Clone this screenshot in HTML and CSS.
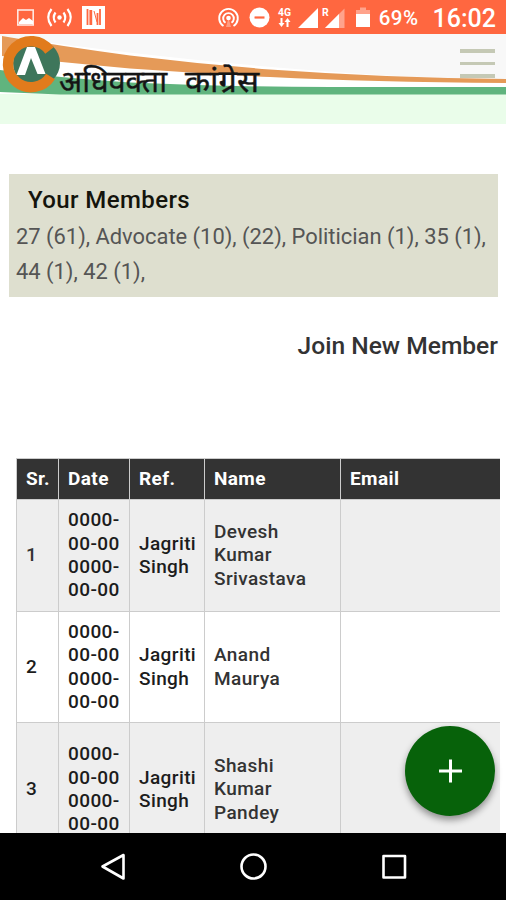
FILE: index.html
```html
<!DOCTYPE html>
<html lang="en">
<head>
    <meta charset="UTF-8">
    <meta name="viewport" content="width=device-width, initial-scale=1.0">
    <title>Your Members</title>
    <link rel="stylesheet" href="styles.css">
</head>
<body>
    <div class="screen">
        <!-- Status Bar -->
        <div class="status-bar">
            <svg width="506" height="34" viewBox="0 0 506 34" fill="none" stroke="#fff">
                <rect x="17.8" y="10" width="15.4" height="15" stroke-width="1.6" opacity="0.85"/>
                <path d="M19 22l4-4 3 2 3-2 4 3v3H19z" fill="#fff" stroke="none"/>
                <circle cx="59.5" cy="17.5" r="2.2" fill="#fff" stroke="none"/>
                <path d="M55.5 12.5q-3.5 5 0 10M63.5 12.5q3.5 5 0 10M51.5 9q-6.5 8.500 0 17M67.5 9q6.5 8.500 0 17" stroke-width="2.2"/>
                <rect x="82" y="6" width="23" height="23" fill="#fff" stroke="none"/>
                <path d="M87.5 9v16M97.500 13v12M100 9v16" stroke="#ff6740" stroke-width="1.8"/>
                <path d="M90.800 10v15" stroke="#ff6740" stroke-width="2.800"/>
                <path d="M94 11l3 11" stroke="#ff6740" stroke-width="1"/>
                <circle cx="228.500" cy="18" r="2.300" fill="#fff" stroke="none"/>
                <path d="M225.500 22.800a5.300 5.300 0 1 1 6 0M223.500 26a9.300 9.300 0 1 1 10 0" stroke-width="1.900"/>
                <path d="M228.500 18l-2.500 9h5z" fill="#fff" stroke="none" opacity="0.35"/>
                <circle cx="259.500" cy="17.500" r="10" fill="#fff" stroke="none"/>
                <path d="M254.500 17.500h10" stroke="#ff6740" stroke-width="2.200"/>
                <text class="signal-text" x="278" y="16" textLength="13" lengthAdjust="spacingAndGlyphs">4G</text>
                <path d="M281.500 18v6M287.500 21v6" stroke-width="2"/>
                <path d="M278.500 23h6l-3 4zM284.500 22h6l-3-4z" fill="#fff" stroke="none"/>
                <path d="M298 28L318 8v20z" fill="#fff" stroke="none"/>
                <text class="signal-text" x="322" y="16">R</text>
                <path d="M325 28L344.500 8.500V28z" fill="#fff" stroke="none" opacity="0.4"/>
                <path d="M325 28L339 14v14z" fill="#fff" stroke="none"/>
                <path d="M356 14V10h4V7.500h6V10h4v4z" fill="#fff" stroke="none" opacity="0.4"/>
                <path d="M356 14h14v13h-14z" fill="#fff" stroke="none"/>
            </svg>
            <div class="status-text">
                <span class="battery">69%</span>
                <span class="clock">16:02</span>
            </div>
        </div>

        <!-- Header with banner and menu -->
        <header class="header">
            <svg class="banner" width="506" height="90" viewBox="0 34 506 90">
                <rect x="0" y="34" width="506" height="60" fill="#fff"/>
                <path d="M0 34H506V80Q280 75 0 36z" fill="#f8f8f8"/>
                <path d="M2 36Q60 46 130 55.500Q200 64 270 69.500Q390 78 506 79V83Q370 82 270 77Q200 73.500 130 68.500Q60 62 2 56z" fill="#e59a58"/>
                <path d="M0 70Q60 78 130 82.500Q230 87 330 87H506V94.500H60L0 92z" fill="#60b47e"/>
                <circle cx="36.500" cy="63" r="23.500" fill="#3e765b"/>
                <path d="M49.500 50.500A23 23 0 1 0 50.500 76.500" fill="none" stroke="#e17b1c" stroke-width="10.500"/>
                <path d="M16.500 75L27 47h8l10.500 27h-8L31 58l-6 17z" fill="#fff"/>
                <text class="banner-text" x="59" y="91.500" textLength="108" lengthAdjust="spacingAndGlyphs">अधिवक्ता</text>
                <text class="banner-text" x="185" y="91.500" textLength="74" lengthAdjust="spacingAndGlyphs">कांग्रेस</text>
            </svg>
            <div class="menu-icon">
                <span></span>
                <span></span>
                <span></span>
            </div>
        </header>

        <main class="content">
            <div class="members-box">
                <h2>Your Members</h2>
                <p>27 (61), Advocate (10), (22), Politician (1), 35 (1), 44 (1), 42 (1),</p>
            </div>

            <div class="join-link">Join New Member</div>

            <!-- Members Table -->
            <div class="table-container">
                <table>
                    <colgroup>
                        <col class="col-sr">
                        <col class="col-date">
                        <col class="col-ref">
                        <col class="col-name">
                        <col class="col-email">
                    </colgroup>
                    <tr class="head-row">
                        <th>Sr.</th>
                        <th>Date</th>
                        <th>Ref.</th>
                        <th>Name</th>
                        <th>Email</th>
                    </tr>
                    <tr class="row-1">
                        <td>1</td>
                        <td class="dark">0000-<br>00-00<br>0000-<br>00-00</td>
                        <td class="dark">Jagriti<br>Singh</td>
                        <td>Devesh<br>Kumar<br>Srivastava</td>
                        <td></td>
                    </tr>
                    <tr class="row-2">
                        <td class="dark">2</td>
                        <td class="dark">0000-<br>00-00<br>0000-<br>00-00</td>
                        <td class="dark">Jagriti<br>Singh</td>
                        <td>Anand<br>Maurya</td>
                        <td></td>
                    </tr>
                    <tr class="row-3">
                        <td class="dark">3</td>
                        <td class="dark">0000-<br>00-00<br>0000-<br>00-00</td>
                        <td class="dark">Jagriti<br>Singh</td>
                        <td>Shashi<br>Kumar<br>Pandey</td>
                        <td></td>
                    </tr>
                </table>
            </div>
        </main>

        <button class="add-button" aria-label="Add">
            <svg width="24" height="24" viewBox="0 0 24 24" stroke="#fff" stroke-width="3">
                <path d="M12.500 .5v23M1 12h23"/>
            </svg>
        </button>

        <!-- Navigation Bar -->
        <nav class="nav-bar">
            <svg width="506" height="67" viewBox="0 833 506 67" fill="none" stroke="#fff" stroke-width="2.600" stroke-linejoin="round">
                <path d="M123.500 855v23.500L102.500 866.500z"/>
                <circle cx="253.500" cy="866.500" r="12"/>
                <rect x="383.500" y="856" width="21.500" height="21.500"/>
            </svg>
        </nav>
    </div>
</body>
</html>
```
FILE: styles.css
```css
body {
    margin: 0;
    font-family: Roboto, Arial, sans-serif;
    background: #fff;
    color: #333;
}
.screen {
    position: relative;
    display: flex;
    flex-direction: column;
    height: 900px;
    width: 506px;
    overflow: hidden;
}
svg {
    display: block;
}
.status-bar {
    position: relative;
    height: 34px;
    flex-shrink: 0;
    background: #ff6740;
}
.status-text {
    position: absolute;
    top: 0;
    right: 10px;
    display: flex;
    align-items: flex-start;
    gap: 14px;
    color: #fff;
    font-weight: 500;
}
.battery {
    font-size: 20.500px;
    letter-spacing: 0.5px;
    line-height: 37px;
}
.clock {
    font-size: 25px;
    line-height: 38px;
}
.signal-text {
    font-size: 10.5px;
    font-weight: 700;
    fill: #fff;
    stroke: none;
}
.header {
    position: relative;
    height: 90px;
    flex-shrink: 0;
    background: #eafdea;
}
.banner-text {
    font-family: "Noto Sans Devanagari", "Noto Sans", sans-serif;
    font-size: 31px;
    fill: #151515;
    stroke: #151515;
    stroke-width: 0.4px;
}
.menu-icon {
    position: absolute;
    top: 15px;
    right: 11px;
    width: 35px;
    display: flex;
    flex-direction: column;
    gap: 9px;
}
.menu-icon span {
    height: 3.5px;
    background: #c5c9b5;
}
.content {
    flex: 1;
    min-height: 0;
    overflow: hidden;
    padding: 50px 6px 0 9px;
}
.members-box {
    box-sizing: border-box;
    width: 489px;
    height: 123px;
    padding: 8px 7px;
    background: #dedfcf;
}
.members-box h2 {
    margin: 0 0 0 12px;
    color: #14140c;
    font-size: 24px;
    font-weight: 500;
    letter-spacing: 0.4px;
    line-height: 37px;
}
.members-box p {
    margin: 0;
    color: #555;
    font-size: 21.9px;
    line-height: 35px;
}
.join-link {
    width: 489px;
    margin-top: 31px;
    font-size: 24.6px;
    font-weight: 500;
    line-height: 36px;
    text-align: right;
}
.table-container {
    width: 484px;
    margin: 94px 0 0 7px;
    overflow: hidden;
}
table {
    width: 700px;
    table-layout: fixed;
    border-collapse: collapse;
    font-size: 19px;
    font-weight: 500;
    letter-spacing: 0.4px;
    line-height: 23.3px;
}
.col-sr {
    width: 42px;
}
.col-date {
    width: 71px;
}
.col-ref {
    width: 75px;
}
.col-name {
    width: 136px;
}
th, td {
    padding: 0 7px 0 9px;
    border: 1px solid #ccc;
    text-align: left;
    vertical-align: middle;
}
td {
    padding-bottom: 1px;
}
th {
    background: #333;
    color: #fff;
    font-weight: 700;
}
.dark {
    color: #1c1c1c;
}
.head-row {
    height: 41px;
}
.row-1 {
    height: 112px;
    background: #eee;
}
.row-2 {
    height: 111px;
}
.row-3 {
    height: 134px;
    background: #eee;
}
.add-button {
    position: absolute;
    right: 11px;
    bottom: 84px;
    width: 90px;
    height: 90px;
    padding: 0;
    display: flex;
    justify-content: center;
    align-items: center;
    background: #07620a;
    border: none;
    border-radius: 50%;
    box-shadow: 0 4px 7px rgba(0, 0, 0, 0.4);
}
.nav-bar {
    height: 67px;
    flex-shrink: 0;
    background: #000;
}
```
